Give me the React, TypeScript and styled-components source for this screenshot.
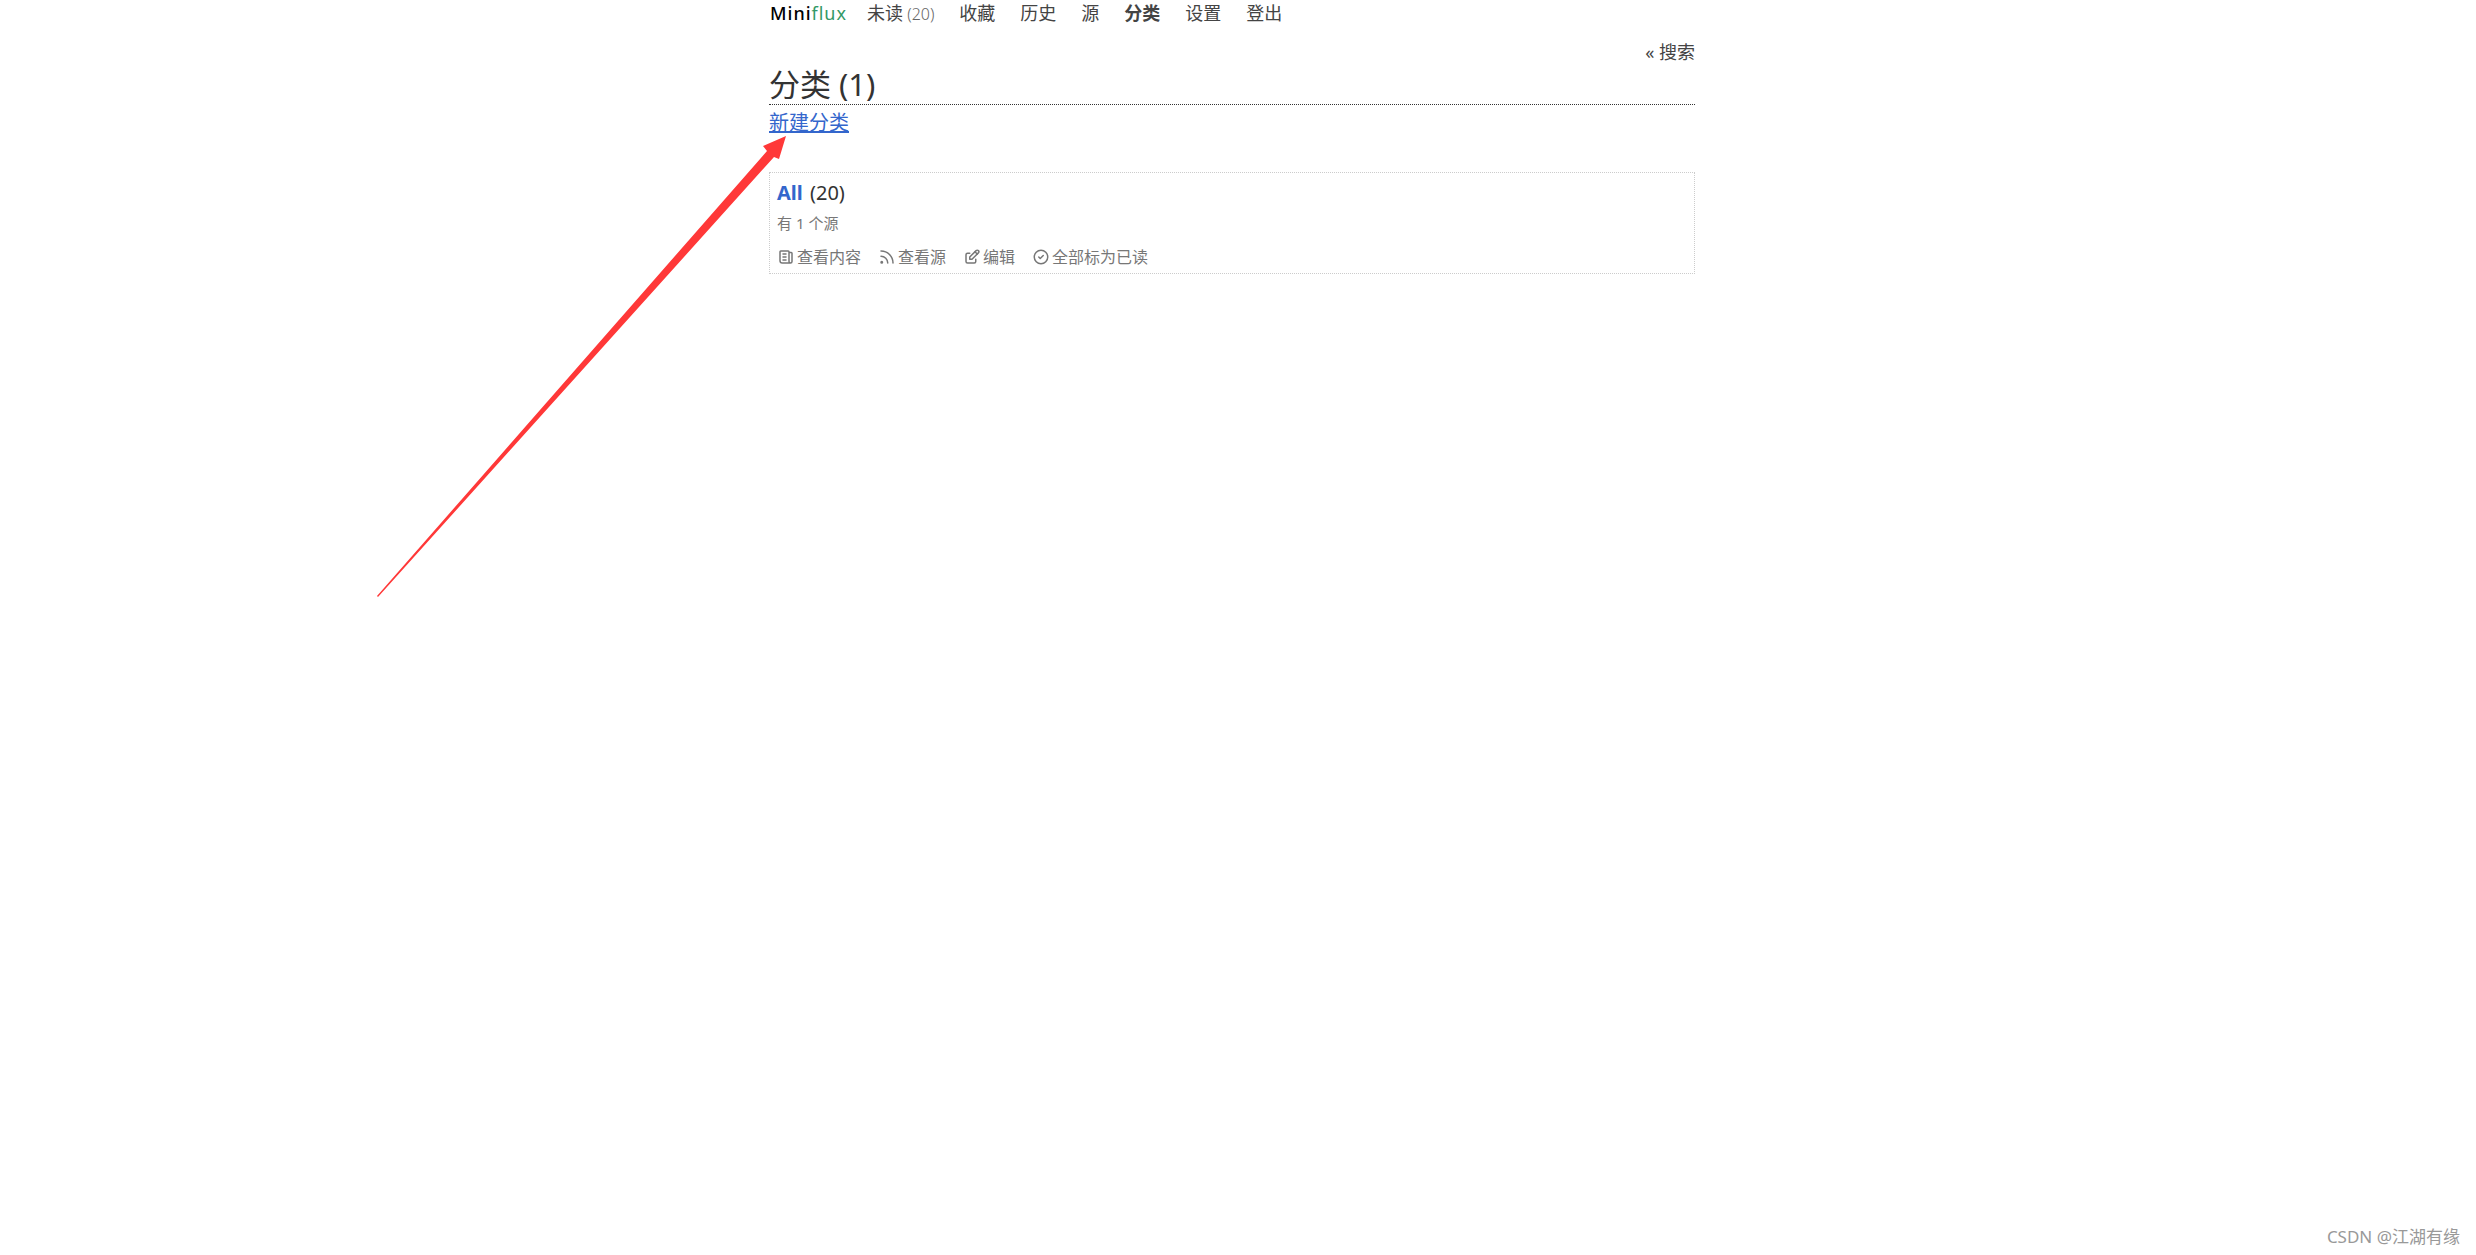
import React from "react";
import styled, { createGlobalStyle } from "styled-components";

const GlobalStyle = createGlobalStyle`
  * { box-sizing: border-box; }
  body {
    margin: 0;
    background: #fff;
    color: #333;
    font-family: "Noto Sans", "Noto Sans CJK SC", sans-serif;
    font-weight: 400;
  }
`;

const Page = styled.div`
  position: relative;
  min-height: 100vh;
  padding-right: 12px;
`;

const Container = styled.div`
  max-width: 926px;
  margin: 0 auto;
`;

const Nav = styled.nav`
  display: flex;
  align-items: baseline;
  font-size: 18px;
  line-height: 26px;
`;

const Logo = styled.a`
  margin-right: 20px;
  padding-left: 1px;
  color: #000;
  font-weight: 500;
  letter-spacing: 1px;
  text-decoration: none;
  span { color: #339966; font-weight: 400; }
`;

const Menu = styled.ul`
  display: flex;
  gap: 25px;
  margin: 0;
  padding: 0;
  list-style: none;
`;

const NavLink = styled.a<{ $active?: boolean }>`
  color: #444;
  font-weight: ${(p) => (p.$active ? 700 : 400)};
  text-decoration: none;
`;

const Counter = styled.span`
  color: #666;
  font-size: 16px;
  font-weight: 300;
`;

const Search = styled.div`
  display: flex;
  justify-content: flex-end;
  padding-top: 12px;
  font-size: 18px;
  line-height: 26px;
`;

const PageHeader = styled.header`
  margin-bottom: 32px;
`;

const Title = styled.h1`
  margin: 0;
  border-bottom: 1px dotted #333;
  font-size: 31px;
  font-weight: 400;
  line-height: 39px;
`;

const Actions = styled.div`
  position: relative;
  font-size: 20px;
  line-height: 35px;
`;

const CreateLink = styled.a`
  color: #3366cc;
`;

const Arrow = styled.svg`
  position: absolute;
  top: 30px;
  right: 100%;
  margin-right: -17px;
  width: 412px;
  height: 464px;
  pointer-events: none;
`;

const Card = styled.article`
  padding: 6px 7px 2px;
  border: 1px dotted #ccc;
`;

const CardTitle = styled.h2`
  margin: 0;
  font-size: 20px;
  font-weight: 400;
  line-height: 28px;
  a { margin-right: 2px; color: #3366cc; font-weight: 700; text-decoration: none; }
`;

const Meta = styled.p`
  margin: 0;
  color: #777;
  font-size: 15px;
  line-height: 32px;
`;

const CardActions = styled.ul`
  display: flex;
  gap: 17px;
  margin: 4px 0 0;
  padding: 0;
  list-style: none;
`;

const CardAction = styled.a`
  display: flex;
  align-items: center;
  gap: 2px;
  color: #777;
  font-size: 16px;
  line-height: 28px;
  text-decoration: none;
`;

const Glyph = styled.svg`
  width: 18px;
  height: 18px;
  fill: none;
  stroke: currentColor;
  stroke-width: 2;
  stroke-linecap: round;
  stroke-linejoin: round;
`;

const Watermark = styled.div`
  position: absolute;
  right: 16px;
  bottom: 4px;
  color: #999;
  font-size: 17px;
  line-height: 28px;
`;

const menu = [
  { label: "未读", count: 20 },
  { label: "收藏" },
  { label: "历史" },
  { label: "源" },
  { label: "分类", active: true },
  { label: "设置" },
  { label: "登出" },
];

const actions = [
  {
    label: "查看内容",
    paths: [
      "M16 6h3a1 1 0 0 1 1 1v11a2 2 0 0 1-4 0V5a1 1 0 0 0-1-1H5a1 1 0 0 0-1 1v12a3 3 0 0 0 3 3h11",
      "M8 8h4M8 12h4M8 16h4",
    ],
  },
  {
    label: "查看源",
    paths: ["M4 19a1 1 0 1 0 2 0a1 1 0 1 0-2 0", "M4 4a16 16 0 0 1 16 16", "M4 11a9 9 0 0 1 9 9"],
  },
  {
    label: "编辑",
    paths: [
      "M9 7H6a2 2 0 0 0-2 2v9a2 2 0 0 0 2 2h9a2 2 0 0 0 2-2v-3",
      "M9 15h3l8.500-8.500a1.500 1.500 0 0 0-3-3L9 12v3",
      "M16 5l3 3",
    ],
  },
  {
    label: "全部标为已读",
    paths: ["M3 12a9 9 0 1 0 18 0a9 9 0 1 0-18 0", "M9 12l2 2l4-4"],
  },
];

export default function App() {
  return (
    <Page>
      <GlobalStyle />
      <Container>
        <Nav>
          <Logo href="#">Mini<span>flux</span></Logo>
          <Menu>
            {menu.map((m) => (
              <li key={m.label}>
                <NavLink href="#" $active={m.active}>
                  {m.label}
                  {m.count && <Counter> ({m.count})</Counter>}
                </NavLink>
              </li>
            ))}
          </Menu>
        </Nav>
        <Search>
          <NavLink href="#">« 搜索</NavLink>
        </Search>
        <main>
          <PageHeader>
            <Title>分类 (1)</Title>
            <Actions>
              <CreateLink href="#">新建分类</CreateLink>
              <Arrow viewBox="0 0 412 464" aria-hidden="true">
                <path d="M412 1L405 24L400 22L4 462L3 461L393 16L389 11Z" fill="#ff3838" />
              </Arrow>
            </Actions>
          </PageHeader>
          <Card>
            <CardTitle><a href="#">All</a> (20)</CardTitle>
            <Meta>有 1 个源</Meta>
            <CardActions>
              {actions.map((a) => (
                <li key={a.label}>
                  <CardAction href="#">
                    <Glyph viewBox="0 0 24 24" aria-hidden="true">
                      {a.paths.map((d) => <path key={d} d={d} />)}
                    </Glyph>
                    {a.label}
                  </CardAction>
                </li>
              ))}
            </CardActions>
          </Card>
        </main>
      </Container>
      <Watermark>CSDN @江湖有缘</Watermark>
    </Page>
  );
}
